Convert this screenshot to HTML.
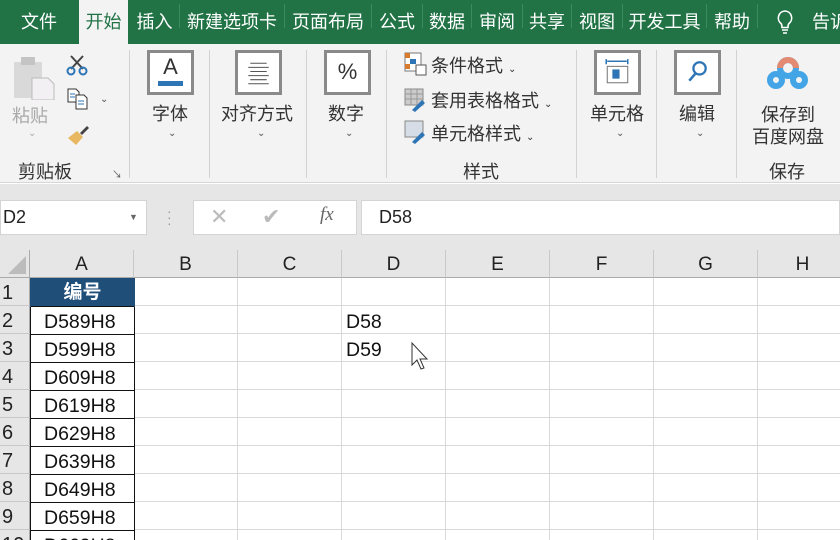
<!DOCTYPE html>
<html><head><meta charset="utf-8"><style>
*{margin:0;padding:0;box-sizing:border-box}
html,body{width:840px;height:540px;overflow:hidden}
body{position:relative;background:#fff;font-family:"Liberation Sans","Noto Sans CJK SC",sans-serif;color:#222}
.a{position:absolute}
.tabs{left:0;top:0;width:840px;height:44px;background:#217346}
.tab{position:absolute;top:8px;height:28px;color:#fff;font-size:18px;line-height:28px;text-align:center;white-space:nowrap}
.tsep{position:absolute;top:4px;width:1px;height:24px;background:#3d8a5f}
.rib{left:0;top:44px;width:840px;height:139px;background:#f3f3f3;border-bottom:1px solid #d6d6d6}
.vsep{position:absolute;top:50px;width:1px;height:128px;background:#d2d2d2}
.lbl{position:absolute;font-size:18px;color:#333;text-align:center;white-space:nowrap}
.chev{position:absolute;font-size:10px;color:#555;text-align:center}
.box{position:absolute;width:47px;height:45px;border:3px solid #8a8a8a;background:#fff}
.fb{left:0;top:184px;width:840px;height:66px;background:#e6e6e6}
.grid{left:0;top:250px;width:840px;height:290px;overflow:hidden}
.ch{position:absolute;top:0;height:28px;background:#e6e6e6;border-right:1px solid #c8c8c8;border-bottom:1px solid #aaa;font-size:19px;line-height:30px;text-align:center;color:#222}
.rh{position:absolute;left:0;width:30px;height:28px;background:#e6e6e6;border-bottom:1px solid #c8c8c8;border-right:1px solid #aaa;font-size:20px;line-height:30px;padding-left:2px;color:#222}
.cell{position:absolute;font-size:19.5px;line-height:31px;color:#111}
</style></head><body>
<div class="a tabs">
 <div class="tab" style="left:0;width:78px">文件</div>
 <div class="a" style="left:79px;top:0;width:49px;height:44px;background:#f3f3f3"></div>
 <div class="tab" style="left:79px;width:49px;color:#217346">开始</div>
 <div class="tab" style="left:130px;width:49px">插入</div><div class="tsep" style="left:179px"></div>
 <div class="tab" style="left:180px;width:104px">新建选项卡</div><div class="tsep" style="left:284px"></div>
 <div class="tab" style="left:285px;width:86px">页面布局</div><div class="tsep" style="left:371px"></div>
 <div class="tab" style="left:372px;width:50px">公式</div><div class="tsep" style="left:422px"></div>
 <div class="tab" style="left:423px;width:48px">数据</div><div class="tsep" style="left:471px"></div>
 <div class="tab" style="left:472px;width:50px">审阅</div><div class="tsep" style="left:522px"></div>
 <div class="tab" style="left:523px;width:48px">共享</div><div class="tsep" style="left:571px"></div>
 <div class="tab" style="left:572px;width:50px">视图</div><div class="tsep" style="left:622px"></div>
 <div class="tab" style="left:623px;width:83px">开发工具</div><div class="tsep" style="left:706px"></div>
 <div class="tab" style="left:707px;width:50px">帮助</div><div class="tsep" style="left:757px"></div>
 <svg class="a" style="left:775px;top:9px" width="20" height="26" viewBox="0 0 20 26"><path d="M10 2a7 7 0 0 0-4 12.5c1 1 1 2 1 4h6c0-2 0-3 1-4A7 7 0 0 0 10 2zM7 21h6M8 24h4" stroke="#fff" stroke-width="1.6" fill="none"/></svg>
 <div class="tab" style="left:812px;width:40px;text-align:left">告诉</div>
</div>
<div class="a rib">
 <svg class="a" style="left:12px;top:10px" width="46" height="46" viewBox="0 0 46 46"><rect x="2" y="8" width="28" height="36" fill="#d9d9d9"/><rect x="9" y="3" width="14" height="8" fill="#c4c4c4"/><path d="M20 24h16l6 6v16H20z" fill="#f3f0f3" stroke="#bbb"/></svg>
 <div class="lbl" style="left:12px;top:58px;color:#aaa">粘贴</div>
 <div class="chev" style="left:28px;top:84px;color:#aaa">⌄</div>
 <svg class="a" style="left:66px;top:10px" width="22" height="22" viewBox="0 0 22 22"><path d="M5 2l12 13M17 2L5 15" stroke="#444" stroke-width="2"/><circle cx="5" cy="17" r="3.5" fill="none" stroke="#2e75b6" stroke-width="2"/><circle cx="17" cy="17" r="3.5" fill="none" stroke="#2e75b6" stroke-width="2"/></svg>
 <svg class="a" style="left:67px;top:44px" width="22" height="22" viewBox="0 0 22 22"><path d="M1 1h8l3 3v10H1z" fill="#fff" stroke="#333"/><path d="M9 7h8l3 3v11H9z" fill="#fff" stroke="#333"/><path d="M11 13h6M11 16h6M3 6h5M3 9h5" stroke="#2e75b6"/></svg>
 <div class="chev" style="left:100px;top:50px">⌄</div>
 <svg class="a" style="left:66px;top:80px" width="24" height="22" viewBox="0 0 24 22"><path d="M2 14l9-7 6 6-7 8z" fill="#e8b860"/><path d="M14 9l7-7 2 2-7 7z" fill="#444"/></svg>
 <div class="lbl" style="left:18px;top:114px">剪贴板</div>
 <div class="a" style="left:112px;top:122px;font-size:10px;color:#555">↘</div>
 <div class="vsep" style="left:129px;top:6px"></div>
 <div class="box" style="left:147px;top:6px"><div style="font-size:22px;text-align:center;line-height:28px;color:#333">A</div><div style="margin:0 8px;height:5px;background:#2e75b6"></div></div>
 <div class="lbl" style="left:152px;top:56px">字体</div><div class="chev" style="left:168px;top:84px">⌄</div>
 <div class="vsep" style="left:209px;top:6px"></div>
 <div class="box" style="left:235px;top:6px"><svg width="41" height="39" viewBox="0 0 40 38"><path d="M12 10h16M10 14h20M12 18h16M10 22h20M12 26h16M10 30h20" stroke="#555"/></svg></div>
 <div class="lbl" style="left:221px;top:56px">对齐方式</div><div class="chev" style="left:257px;top:84px">⌄</div>
 <div class="vsep" style="left:306px;top:6px"></div>
 <div class="box" style="left:324px;top:6px;font-size:22px;text-align:center;line-height:38px;color:#333">%</div>
 <div class="lbl" style="left:328px;top:56px">数字</div><div class="chev" style="left:345px;top:84px">⌄</div>
 <div class="vsep" style="left:386px;top:6px"></div>
 <svg class="a" style="left:404px;top:8px" width="24" height="24" viewBox="0 0 24 24"><rect x="1" y="1" width="16" height="18" fill="#fff" stroke="#777"/><rect x="1" y="1" width="5" height="5" fill="#d77a2e"/><rect x="6" y="7" width="6" height="5" fill="#2e75b6"/><rect x="1" y="12" width="5" height="5" fill="#d77a2e"/><rect x="12" y="13" width="10" height="10" fill="#fff" stroke="#555"/></svg>
 <div class="lbl" style="left:431px;top:8px">条件格式 <span style="font-size:10px">⌄</span></div>
 <svg class="a" style="left:404px;top:44px" width="24" height="24" viewBox="0 0 24 24"><rect x="1" y="1" width="18" height="16" fill="#ccc" stroke="#888"/><path d="M1 6h18M1 11h18M7 1v16M13 1v16" stroke="#999"/><path d="M8 22l10-10 3 3-10 9z" fill="#2e75b6"/></svg>
 <div class="lbl" style="left:431px;top:43px">套用表格格式 <span style="font-size:10px">⌄</span></div>
 <svg class="a" style="left:404px;top:76px" width="24" height="24" viewBox="0 0 24 24"><rect x="1" y="1" width="18" height="16" fill="#d6dde6" stroke="#888"/><path d="M8 22l10-10 3 3-10 9z" fill="#2e75b6"/></svg>
 <div class="lbl" style="left:431px;top:76px">单元格样式 <span style="font-size:10px">⌄</span></div>
 <div class="lbl" style="left:463px;top:114px">样式</div>
 <div class="vsep" style="left:576px;top:6px"></div>
 <div class="box" style="left:594px;top:6px"><svg width="41" height="39" viewBox="0 0 40 38"><path d="M9 6v5M30 6v5M10 8h19" stroke="#2e75b6" stroke-width="1.5"/><rect x="10" y="13" width="20" height="16" fill="#fff" stroke="#777"/><rect x="15" y="16" width="7" height="9" fill="#2e75b6"/></svg></div>
 <div class="lbl" style="left:590px;top:56px">单元格</div><div class="chev" style="left:616px;top:84px">⌄</div>
 <div class="vsep" style="left:656px;top:6px"></div>
 <div class="box" style="left:674px;top:6px"><svg width="41" height="39" viewBox="0 0 40 38"><circle cx="22" cy="15" r="6" fill="none" stroke="#2e75b6" stroke-width="2.2"/><path d="M18 20l-6 7" stroke="#2e75b6" stroke-width="2.5"/></svg></div>
 <div class="lbl" style="left:679px;top:56px">编辑</div><div class="chev" style="left:696px;top:84px">⌄</div>
 <div class="vsep" style="left:736px;top:6px"></div>
 <svg class="a" style="left:766px;top:12px" width="44" height="34" viewBox="0 0 44 34"><circle cx="22" cy="12" r="8" fill="none" stroke="#43a5e6" stroke-width="6"/><circle cx="10" cy="24" r="6" fill="none" stroke="#43a5e6" stroke-width="6"/><circle cx="33" cy="24" r="6" fill="none" stroke="#43a5e6" stroke-width="6"/><path d="M14 12a8 8 0 0 1 16 0" fill="none" stroke="#e48a72" stroke-width="6"/></svg>
 <div class="lbl" style="left:752px;top:60px;line-height:22px">保存到<br>百度网盘</div>
 <div class="lbl" style="left:769px;top:114px">保存</div>
</div>
<div class="a fb">
 <div class="a" style="left:0;top:16px;width:147px;height:35px;background:#fff;border:1px solid #d4d4d4;font-size:18px;line-height:33px;padding-left:2px">D2<span style="position:absolute;left:128px;font-size:9px;color:#666">▼</span></div>
 <div class="a" style="left:167px;top:24px;color:#999;font-size:14px;line-height:6px">·<br>·<br>·</div>
 <div class="a" style="left:193px;top:16px;width:164px;height:35px;background:#fff;border:1px solid #d4d4d4"></div>
 <div class="a" style="left:210px;top:20px;font-size:22px;color:#bbb">✕</div>
 <div class="a" style="left:262px;top:20px;font-size:22px;color:#bbb">✔</div>
 <div class="a" style="left:320px;top:20px;font-size:19px;color:#666;font-style:italic;font-family:'Liberation Serif',serif">fx</div>
 <div class="a" style="left:361px;top:16px;width:479px;height:35px;background:#fff;border:1px solid #d4d4d4;font-size:18px;line-height:33px;padding-left:17px">D58</div>
</div>
<div class="a grid">
 <div class="a" style="left:0;top:0;width:30px;height:28px;background:#e6e6e6;border-right:1px solid #aaa;border-bottom:1px solid #aaa"><svg width="30" height="28"><path d="M26 6v18H8z" fill="#bcbcbc"/></svg></div>
 <div class="ch" style="left:30px;width:104px">A</div>
 <div class="ch" style="left:134px;width:104px">B</div>
 <div class="ch" style="left:238px;width:104px">C</div>
 <div class="ch" style="left:342px;width:104px">D</div>
 <div class="ch" style="left:446px;width:104px">E</div>
 <div class="ch" style="left:550px;width:104px">F</div>
 <div class="ch" style="left:654px;width:104px">G</div>
 <div class="ch" style="left:758px;width:90px">H</div>
 <svg class="a" style="left:30px;top:28px" width="810" height="262"><g stroke="#d9d9d9"><path d="M0 27.5h810M0 55.5h810M0 83.5h810M0 111.5h810M0 139.5h810M0 167.5h810M0 195.5h810M0 223.5h810M0 251.5h810"/><path d="M207.5 0v262M311.5 0v262M415.5 0v262M519.5 0v262M623.5 0v262M727.5 0v262"/></g></svg>
 <div class="rh" style="top:28px">1</div><div class="rh" style="top:56px">2</div><div class="rh" style="top:84px">3</div><div class="rh" style="top:112px">4</div><div class="rh" style="top:140px">5</div><div class="rh" style="top:168px">6</div><div class="rh" style="top:196px">7</div><div class="rh" style="top:224px">8</div><div class="rh" style="top:252px">9</div><div class="rh" style="top:280px">10</div>
 <div class="a" style="left:30px;top:28px;width:105px;height:270px;border:1px solid #111;border-top:none;background:#fff"></div>
 <div class="a" style="left:30px;top:28px;width:105px;height:29px;background:#1f4e79;color:#fff;font-weight:bold;font-size:19px;text-align:center;line-height:29px">编号</div>
 <svg class="a" style="left:31px;top:56px" width="103" height="234"><path d="M0 .5h103M0 28.5h103M0 56.5h103M0 84.5h103M0 112.5h103M0 140.5h103M0 168.5h103M0 196.5h103M0 224.5h103" stroke="#111"/></svg>
 <div class="cell" style="left:44px;top:57px">D589H8</div>
 <div class="cell" style="left:44px;top:85px">D599H8</div>
 <div class="cell" style="left:44px;top:113px">D609H8</div>
 <div class="cell" style="left:44px;top:141px">D619H8</div>
 <div class="cell" style="left:44px;top:169px">D629H8</div>
 <div class="cell" style="left:44px;top:197px">D639H8</div>
 <div class="cell" style="left:44px;top:225px">D649H8</div>
 <div class="cell" style="left:44px;top:253px">D659H8</div>
 <div class="cell" style="left:44px;top:281px">D669H8</div>
 <div class="cell" style="left:346px;top:57px">D58</div>
 <div class="cell" style="left:346px;top:85px">D59</div>
 <svg class="a" style="left:411px;top:92px" width="20" height="30" viewBox="0 0 20 30"><path d="M1 1v22l5-5 4 9 3-1-4-9h7z" fill="#fff" stroke="#333"/></svg>
</div>
</body></html>
